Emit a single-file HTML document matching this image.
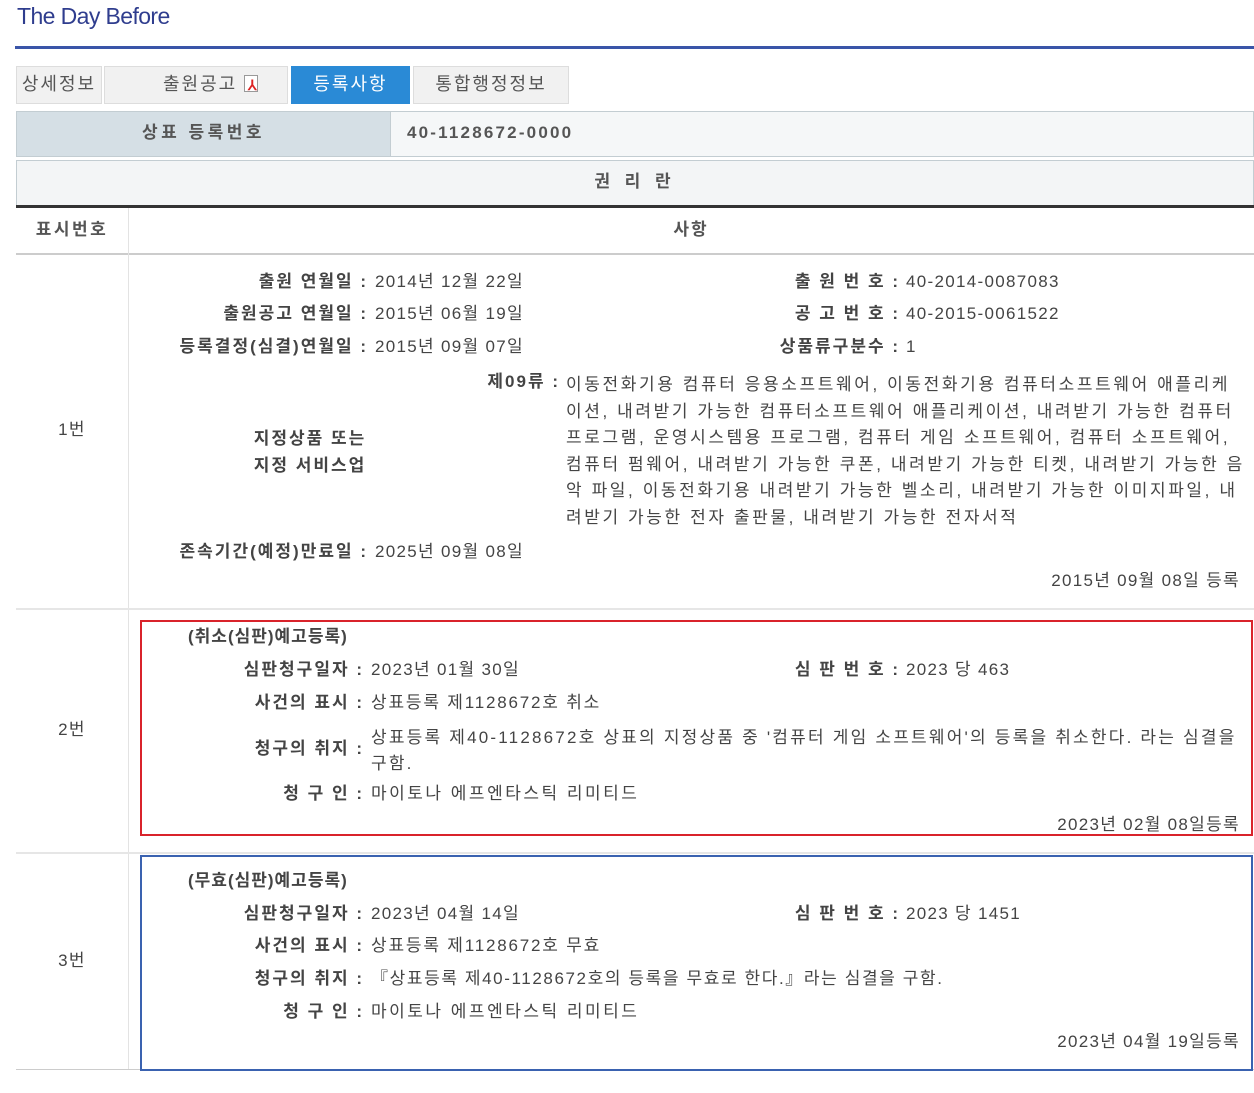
<!DOCTYPE html>
<html><head><meta charset="utf-8"><style>
*{margin:0;padding:0;box-sizing:border-box}
body{width:1254px;height:1093px;background:#fff;position:relative;overflow:hidden;font-family:"Liberation Sans","Noto Sans CJK KR","NanumGothic",sans-serif;color:#444;font-size:17px}
.a{position:absolute;white-space:nowrap;line-height:20px;letter-spacing:1.3px}
.l{position:absolute;white-space:nowrap;line-height:20px;font-weight:bold;color:#444;text-align:right;letter-spacing:2px}
.b{position:absolute}
</style></head><body>
<div class="a" style="left:17px;top:6px;font-size:23px;color:#2f3d8e;letter-spacing:-0.6px">The Day Before</div>
<div class="b" style="left:15px;top:46px;width:1239px;height:3px;background:#3a55a8"></div>

<div class="b" style="left:16px;top:66px;width:86px;height:38px;background:#f1f1f1;border:1px solid #ddd"></div>
<div class="a" style="left:16px;top:74px;width:86px;text-align:center;color:#555;font-size:18px;letter-spacing:2px">상세정보</div>
<div class="b" style="left:104px;top:66px;width:184px;height:38px;background:#f1f1f1;border:1px solid #ddd"></div>
<div class="a" style="left:163px;top:74px;color:#555;font-size:18px;letter-spacing:2px">출원공고</div>
<div class="b" style="left:244px;top:75px;width:14px;height:17px;border:1px solid #999;background:#fff"></div>
<div class="a" style="left:248px;top:75px;color:#d22;font-size:14px;font-weight:bold">⅄</div>
<div class="b" style="left:291px;top:66px;width:119px;height:38px;background:#2a8ad6"></div>
<div class="a" style="left:291px;top:74px;width:119px;text-align:center;color:#fff;font-size:18px;letter-spacing:2px">등록사항</div>
<div class="b" style="left:413px;top:66px;width:156px;height:38px;background:#f1f1f1;border:1px solid #ddd"></div>
<div class="a" style="left:413px;top:74px;width:156px;text-align:center;color:#555;font-size:18px;letter-spacing:2px">통합행정정보</div>

<div class="b" style="left:16px;top:111px;width:375px;height:46px;background:#d5dfe5;border:1px solid #c3cdd2"></div>
<div class="b" style="left:390px;top:111px;width:864px;height:46px;background:#f5f7f8;border:1px solid #c3cdd2"></div>
<div class="a" style="left:16px;top:123px;width:375px;text-align:center;font-weight:bold;color:#555;letter-spacing:3.5px">상표 등록번호</div>
<div class="a" style="left:407px;top:123px;font-weight:bold;color:#555;letter-spacing:2.2px">40-1128672-0000</div>

<div class="b" style="left:16px;top:160px;width:1238px;height:47px;background:#f3f5f6;border:1px solid #c3cdd2"></div>
<div class="a" style="left:16px;top:172px;width:1238px;text-align:center;font-weight:bold;color:#555;letter-spacing:5px">권 리 란</div>
<div class="b" style="left:16px;top:205px;width:1238px;height:3px;background:#333"></div>
<div class="a" style="left:16px;top:220px;width:112px;text-align:center;font-weight:bold;color:#555;letter-spacing:2.5px">표시번호</div>
<div class="a" style="left:128px;top:220px;width:1126px;text-align:center;font-weight:bold;color:#555;letter-spacing:2px">사항</div>
<div class="b" style="left:16px;top:253px;width:1238px;height:2px;background:#ccc"></div>
<div class="b" style="left:128px;top:208px;width:1px;height:862px;background:#e3e3e3"></div>
<div class="b" style="left:16px;top:608px;width:1238px;height:2px;background:#e6e6e6"></div>
<div class="b" style="left:16px;top:852px;width:1238px;height:2px;background:#e6e6e6"></div>
<div class="b" style="left:16px;top:1069px;width:1238px;height:1px;background:#ccc"></div>

<div class="a" style="left:16px;top:420px;width:112px;text-align:center">1번</div>
<div class="a" style="left:16px;top:720px;width:112px;text-align:center">2번</div>
<div class="a" style="left:16px;top:951px;width:112px;text-align:center">3번</div>

<!-- row1 -->
<div class="l" style="right:886px;top:272px">출원 연월일 :</div><div class="a" style="left:375px;top:272px">2014년 12월 22일</div>
<div class="l" style="right:886px;top:304px">출원공고 연월일 :</div><div class="a" style="left:375px;top:304px">2015년 06월 19일</div>
<div class="l" style="right:886px;top:337px">등록결정(심결)연월일 :</div><div class="a" style="left:375px;top:337px">2015년 09월 07일</div>
<div class="l" style="right:354px;top:272px">출 원 번 호 :</div><div class="a" style="left:906px;top:272px">40-2014-0087083</div>
<div class="l" style="right:354px;top:304px">공 고 번 호 :</div><div class="a" style="left:906px;top:304px">40-2015-0061522</div>
<div class="l" style="right:354px;top:337px">상품류구분수 :</div><div class="a" style="left:906px;top:337px">1</div>
<div class="l" style="right:694px;top:372px">제09류 :</div>
<div class="a" style="left:566px;top:372px;line-height:26.6px;letter-spacing:2.6px">이동전화기용 컴퓨터 응용소프트웨어, 이동전화기용 컴퓨터소프트웨어 애플리케<br>이션, 내려받기 가능한 컴퓨터소프트웨어 애플리케이션, 내려받기 가능한 컴퓨터<br>프로그램, 운영시스템용 프로그램, 컴퓨터 게임 소프트웨어, 컴퓨터 소프트웨어,<br>컴퓨터 펌웨어, 내려받기 가능한 쿠폰, 내려받기 가능한 티켓, 내려받기 가능한 음<br>악 파일, 이동전화기용 내려받기 가능한 벨소리, 내려받기 가능한 이미지파일, 내<br>려받기 가능한 전자 출판물, 내려받기 가능한 전자서적</div>
<div class="l" style="left:230px;top:425px;width:160px;text-align:center;line-height:27px">지정상품 또는<br>지정 서비스업</div>
<div class="l" style="right:886px;top:542px">존속기간(예정)만료일 :</div><div class="a" style="left:375px;top:542px">2025년 09월 08일</div>
<div class="a" style="right:14px;top:571px">2015년 09월 08일 등록</div>

<!-- row2 -->
<div class="b" style="left:140px;top:620px;width:1113px;height:216px;border:2px solid #d9232b"></div>
<div class="l" style="left:188px;top:627px;text-align:left;letter-spacing:1px">(취소(심판)예고등록)</div>
<div class="l" style="right:890px;top:660px">심판청구일자 :</div><div class="a" style="left:371px;top:660px">2023년 01월 30일</div>
<div class="l" style="right:354px;top:660px">심 판 번 호 :</div><div class="a" style="left:906px;top:660px">2023 당 463</div>
<div class="l" style="right:890px;top:693px">사건의 표시 :</div><div class="a" style="left:371px;top:693px;letter-spacing:1.8px">상표등록 제1128672호 취소</div>
<div class="l" style="right:890px;top:739px">청구의 취지 :</div><div class="a" style="left:371px;top:725px;line-height:26px;letter-spacing:2.2px">상표등록 제40-1128672호 상표의 지정상품 중 '컴퓨터 게임 소프트웨어'의 등록을 취소한다. 라는 심결을<br>구함.</div>
<div class="l" style="right:890px;top:784px">청 구 인 :</div><div class="a" style="left:371px;top:784px;letter-spacing:2.5px">마이토나 에프엔타스틱 리미티드</div>
<div class="a" style="right:14px;top:815px">2023년 02월 08일등록</div>

<!-- row3 -->
<div class="b" style="left:140px;top:855px;width:1113px;height:216px;border:2px solid #3a62b0"></div>
<div class="l" style="left:188px;top:871px;text-align:left;letter-spacing:1px">(무효(심판)예고등록)</div>
<div class="l" style="right:890px;top:904px">심판청구일자 :</div><div class="a" style="left:371px;top:904px">2023년 04월 14일</div>
<div class="l" style="right:354px;top:904px">심 판 번 호 :</div><div class="a" style="left:906px;top:904px">2023 당 1451</div>
<div class="l" style="right:890px;top:936px">사건의 표시 :</div><div class="a" style="left:371px;top:936px;letter-spacing:1.8px">상표등록 제1128672호 무효</div>
<div class="l" style="right:890px;top:969px">청구의 취지 :</div><div class="a" style="left:371px;top:969px;letter-spacing:1.6px">『상표등록 제40-1128672호의 등록을 무효로 한다.』라는 심결을 구함.</div>
<div class="l" style="right:890px;top:1002px">청 구 인 :</div><div class="a" style="left:371px;top:1002px;letter-spacing:2.5px">마이토나 에프엔타스틱 리미티드</div>
<div class="a" style="right:14px;top:1032px">2023년 04월 19일등록</div>
</body></html>
